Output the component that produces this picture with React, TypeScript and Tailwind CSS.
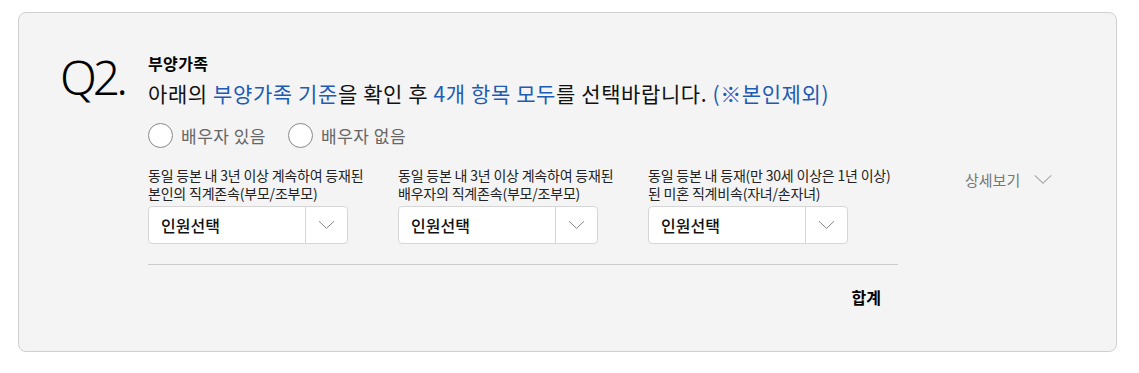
import { useState } from 'react';

const columns = [
  ['동일 등본 내 3년 이상 계속하여 등재된', '본인의 직계존속(부모/조부모)'],
  ['동일 등본 내 3년 이상 계속하여 등재된', '배우자의 직계존속(부모/조부모)'],
  ['동일 등본 내 등재(만 30세 이상은 1년 이상)', '된 미혼 직계비속(자녀/손자녀)'],
];

const Chevron = ({ className }: { className?: string }) => (
  <svg viewBox="0 0 20 12" className={className} fill="none" stroke="currentColor" strokeWidth="1.2">
    <path d="M1 1.5 L10 10 L19 1.5" />
  </svg>
);

const App = () => {
  const [spouse, setSpouse] = useState<string | null>(null);

  return (
    <div className="w-[1139px] h-[373px] bg-white pt-3 pl-[18px] font-['Noto_Sans_CJK_KR',sans-serif]">
      <div className="w-[1099px] h-[340px] bg-[#f4f4f4] border border-[#cfcfcf] rounded-lg flex pl-[41px] pt-[40px]">
        {/* Question number */}
        <div className="w-[88px] text-[48px] leading-none font-['Noto_Sans',sans-serif] font-light text-black tracking-[-4px]">
          Q2.
        </div>

        <div className="flex-1">
          <div className="text-[16px] font-bold text-black leading-[20px] tracking-[0.4px]">부양가족</div>
          <div className="text-[21px] text-[#111] leading-[28px] mt-[6px] tracking-[0.6px]">
            아래의 <span className="text-[#1d5bb5]">부양가족 기준</span>을 확인 후{' '}
            <span className="text-[#1d5bb5]">4개 항목 모두</span>를 선택바랍니다.{' '}
            <span className="text-[#1d5bb5]">(※본인제외)</span>
          </div>

          {/* Radios */}
          <div className="flex items-center gap-[22px] mt-[16px]">
            {['배우자 있음', '배우자 없음'].map((label) => (
              <button
                key={label}
                onClick={() => setSpouse(label)}
                className="flex items-center gap-[8px] text-[17px] tracking-[0.5px] text-[#666]"
              >
                <span className="w-[25px] h-[25px] rounded-full border border-[#888] bg-white flex items-center justify-center">
                  {spouse === label && <span className="w-[11px] h-[11px] rounded-full bg-[#1d5bb5]" />}
                </span>
                {label}
              </button>
            ))}
          </div>

          {/* Selects */}
          <div className="flex mt-[17px]">
            {columns.map((lines, i) => (
              <div key={i} className="w-[250px]">
                <div className="text-[14px] leading-[18px] text-[#222] tracking-[-0.2px]">
                  <div>{lines[0]}</div>
                  <div>{lines[1]}</div>
                </div>
                <div className="mt-[4px] w-[200px] h-[38px] bg-white border border-[#d6d6d6] rounded-[4px] flex">
                  <div className="flex-1 flex items-center pl-[12px] text-[16px] font-medium text-[#111]">인원선택</div>
                  <div className="w-[42px] border-l border-[#d6d6d6] flex items-center justify-center text-[#888]">
                    <Chevron className="w-[17px] h-[10px]" />
                  </div>
                </div>
              </div>
            ))}
            <div className="flex items-start gap-[13px] pt-[3px] ml-[67px] text-[15px] text-[#777]">
              상세보기
              <Chevron className="w-[20px] h-[11px] mt-[5px] text-[#aaa]" />
            </div>
          </div>

          <div className="w-[750px] h-px bg-[#cccccc] mt-[20px]" />
          <div className="w-[750px] flex justify-end pr-[17px] mt-[20px] text-[16px] font-bold text-black">합계</div>
        </div>
      </div>
    </div>
  );
};

export default App;
